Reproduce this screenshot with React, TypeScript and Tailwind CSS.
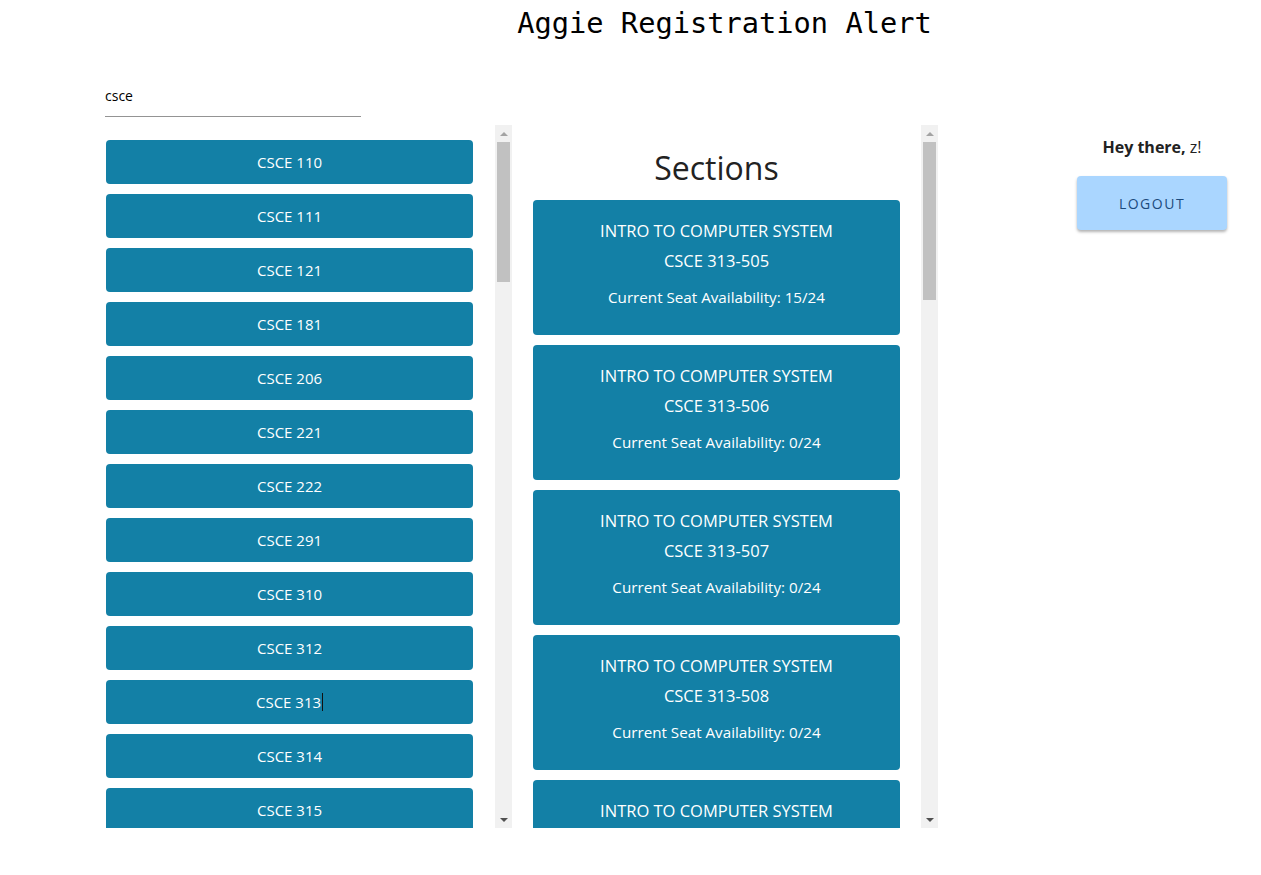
import React from 'react'

const courses = ['110', '111', '121', '181', '206', '221', '222', '291', '310', '312', '313', '314', '315']
const sections = [
  { id: '505', seats: '15/24' },
  { id: '506', seats: '0/24' },
  { id: '507', seats: '0/24' },
  { id: '508', seats: '0/24' },
  { id: '509', seats: '' },
]

const ui = { fontFamily: '"Open Sans", "Noto Sans", sans-serif' }

const Scrollbar: React.FC<{ thumb: number }> = ({ thumb }) => (
  <div className="w-[17px] h-full bg-[#f1f1f1] flex flex-col items-center shrink-0">
    <div className="h-[17px] w-full flex items-center justify-center">
      <div className="w-0 h-0 border-l-[4px] border-r-[4px] border-b-[4px] border-l-transparent border-r-transparent border-b-[#a3a3a3]" />
    </div>
    <div className="w-[13px] bg-[#c1c1c1]" style={{ height: thumb }} />
    <div className="flex-1" />
    <div className="h-[17px] w-full flex items-center justify-center">
      <div className="w-0 h-0 border-l-[4px] border-r-[4px] border-t-[4px] border-l-transparent border-r-transparent border-t-[#505050]" />
    </div>
  </div>
)

export default function App() {
  return (
    <div className="w-[1261px] h-[875px] bg-white overflow-hidden text-[#222]" style={ui}>
      <h1 className="pl-[188px] text-center text-[28.7px] leading-[46px] text-black" style={{ fontFamily: '"DejaVu Sans Mono", "Liberation Mono", monospace' }}>
        Aggie Registration Alert
      </h1>

      <div className="flex pl-[105px] mt-[26px]">
        {/* course list */}
        <div className="w-[407px] flex flex-col">
          <div className="w-[256px] h-[45px] border-b border-[#949494] flex items-center text-[14px] text-black pt-[2px]">csce</div>
          <div className="flex h-[703px] mt-[8px]">
            <div className="w-[390px] overflow-hidden pt-[15px] pl-[1px] flex flex-col gap-[10px]">
              {courses.map(c => (
                <button key={c} className="w-[367px] h-[44px] shrink-0 rounded-[4px] bg-[#1380a6] text-white text-[15px] flex items-center justify-center">
                  CSCE {c}
                  {c === '313' && <span className="inline-block w-[1px] h-[18px] bg-[#111] ml-[1px]" />}
                </button>
              ))}
            </div>
            <Scrollbar thumb={140} />
          </div>
        </div>

        {/* sections */}
        <div className="w-[425px] ml-[1px] flex h-[703px] mt-[53px]">
          <div className="w-[408px] overflow-hidden flex flex-col pl-[20px]">
            <h2 className="w-[367px] text-center text-[32px] leading-[44px] mt-[21px] mb-[10px] text-[#222]">Sections</h2>
            <div className="flex flex-col gap-[10px]">
              {sections.map(s => (
                <div key={s.id} className="w-[367px] h-[135px] shrink-0 rounded-[4px] bg-[#1380a6] text-white flex flex-col items-center pt-[19px]">
                  <p className="text-[16.5px] leading-[24px]">INTRO TO COMPUTER SYSTEM</p>
                  {s.seats && (
                    <>
                      <p className="text-[16.5px] leading-[24px] mt-[6px]">CSCE 313-{s.id}</p>
                      <p className="text-[15.2px] leading-[22px] mt-[13px]">Current Seat Availability: {s.seats}</p>
                    </>
                  )}
                </div>
              ))}
            </div>
          </div>
          <Scrollbar thumb={158} />
        </div>

        {/* user */}
        <div className="w-[150px] ml-[139px] mt-[63px] flex flex-col items-center">
          <p className="text-[16px] leading-[24px] text-[#222]"><span className="font-bold">Hey there,</span> z!</p>
          <button className="mt-[17px] w-[150px] h-[54px] rounded-[4px] bg-[#aad6ff] text-[#1c4b7d] text-[14px] tracking-[1.5px] shadow-[0_2px_3px_rgba(0,0,0,0.3)]">
            LOGOUT
          </button>
        </div>
      </div>
    </div>
  )
}
